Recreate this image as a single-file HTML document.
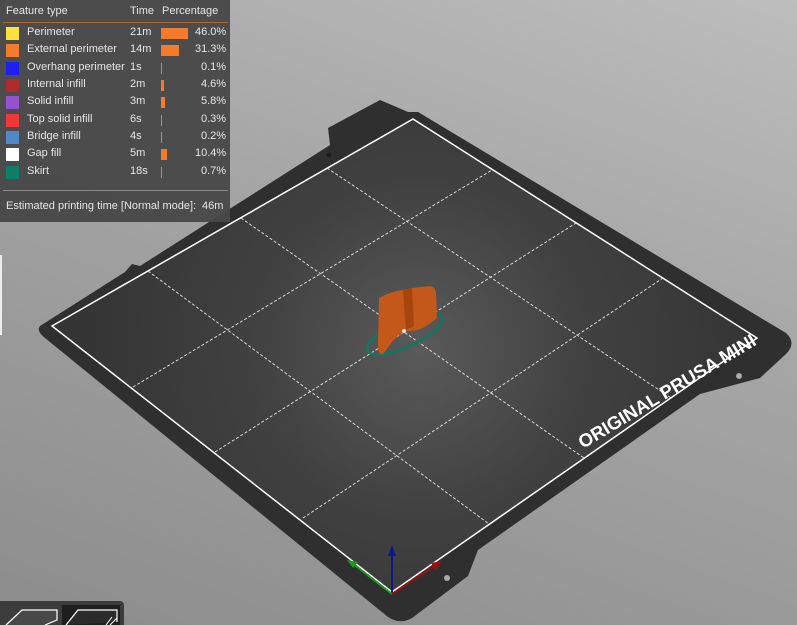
<!DOCTYPE html>
<html><head><meta charset="utf-8"><style>
html,body{margin:0;padding:0;width:797px;height:625px;overflow:hidden;font-family:"Liberation Sans","DejaVu Sans",sans-serif}
#bg{position:absolute;left:0;top:0;width:797px;height:625px;background:linear-gradient(200deg,#bdbdbd 0%,#a6a6a6 40%,#8c8c8c 100%)}
svg{position:absolute;left:0;top:0}
#leg{position:absolute;left:0;top:0;width:230px;height:222px;background:rgba(72,72,72,0.96);color:#e6e6e6;font-size:11px}
.r{position:absolute;left:0;height:17px;width:230px}
.r span{position:absolute;top:1px}
.sw{position:absolute;left:6px;top:2px;width:13px;height:13px}
.bar{position:absolute;left:161px;top:3px;height:11px;background:#f47b2b}
</style></head><body>
<div id="bg"></div>
<svg width="797" height="625" viewBox="0 0 797 625">
<defs>
<radialGradient id="pg" cx="420" cy="350" r="330" gradientUnits="userSpaceOnUse">
<stop offset="0" stop-color="#5a5a5a"/><stop offset="0.5" stop-color="#414141"/><stop offset="1" stop-color="#353535"/></radialGradient>
</defs>
<path d="M40,326 L125,272 L132,264 L140,266 L330,145 L328,128 L380,100 L408,112 L418,112 L786,333 Q797,343 786,354 L760,378 L700,394 L478,550 L468,576 L412,618 Q400,625 388,617 L45,338 Q36,331 40,326 Z" fill="#2f2f2f"/>
<polygon points="52,326 413,119 757,338 392,592" fill="url(#pg)" stroke="#fff" stroke-width="1.5"/>
<g stroke="#e8e8e8" stroke-width="0.9" stroke-dasharray="3,2" fill="none">
<line x1="148" y1="271" x2="489" y2="524"/>
<line x1="241" y1="218" x2="584" y2="458"/>
<line x1="327" y1="168" x2="671" y2="398"/>
<line x1="133" y1="387" x2="492" y2="170"/>
<line x1="215" y1="452" x2="576" y2="223"/>
<line x1="303" y1="518" x2="663" y2="278"/>
</g>
<circle cx="739" cy="376" r="3" fill="#aaa"/>
<circle cx="447" cy="578" r="3" fill="#aaa"/>
<circle cx="329" cy="155" r="2.5" fill="#1e1e1e"/>
<text x="0" y="0" transform="translate(583,449) rotate(-31)" fill="#fff" font-weight="bold" font-size="18.5" font-family="Liberation Sans,sans-serif">ORIGINAL PRUSA MINI</text>
<ellipse cx="405" cy="334" rx="41" ry="13" transform="rotate(-24 405 334)" fill="none" stroke="#0b7a5e" stroke-width="2.5"/>
<path d="M379,298 Q392,291 403,290 L412,288 L430,286 Q436,287 436,294 L437,318 Q428,326 418,330 L408,331 Q398,334 392,342 L383,354 Q378,355 378,346 Z" fill="#c4581a"/>
<path d="M403,290 L412,288 L414,326 L406,330 Z" fill="#a8450f"/>
<circle cx="404" cy="331" r="2" fill="#e8e8e8"/>
<g stroke-width="2" fill="none">
<line x1="392" y1="594" x2="392" y2="552" stroke="#0a1a8a"/>
<line x1="392" y1="594" x2="352" y2="563" stroke="#1a9a1a"/>
<line x1="392" y1="594" x2="436" y2="565" stroke="#9a1010"/>
</g>
<polygon points="392,545 388,556 396,556" fill="#0a1a8a"/>
<polygon points="347,560 358,562 353,568" fill="#1a9a1a"/>
<polygon points="442,561 431,563 436,570" fill="#9a1010"/>
</svg>
<div style="position:absolute;left:0;top:255px;width:2px;height:80px;background:#eee"></div>
<div id="leg">
<div class="r" style="top:4px"><span style="left:6px">Feature type</span><span style="left:130px">Time</span><span style="left:162px">Percentage</span></div>
<div style="position:absolute;left:3px;top:22px;width:225px;height:1px;background:#b06a35"></div>
<div class="r" style="top:25px"><div class="sw" style="background:#ffe03c"></div><span style="left:27px">Perimeter</span><span style="left:130px">21m</span><div class="bar" style="width:27px"></div><span style="left:195px">46.0%</span></div>
<div class="r" style="top:42px"><div class="sw" style="background:#f47b2b"></div><span style="left:27px">External perimeter</span><span style="left:130px">14m</span><div class="bar" style="width:18px"></div><span style="left:195px">31.3%</span></div>
<div class="r" style="top:60px"><div class="sw" style="background:#1f1ff5"></div><span style="left:27px">Overhang perimeter</span><span style="left:130px">1s</span><div class="bar" style="width:1px"></div><span style="left:201px">0.1%</span></div>
<div class="r" style="top:77px"><div class="sw" style="background:#b02a2a"></div><span style="left:27px">Internal infill</span><span style="left:130px">2m</span><div class="bar" style="width:3px"></div><span style="left:201px">4.6%</span></div>
<div class="r" style="top:94px"><div class="sw" style="background:#9352d0"></div><span style="left:27px">Solid infill</span><span style="left:130px">3m</span><div class="bar" style="width:4px"></div><span style="left:201px">5.8%</span></div>
<div class="r" style="top:112px"><div class="sw" style="background:#f0383a"></div><span style="left:27px">Top solid infill</span><span style="left:130px">6s</span><div class="bar" style="width:1px"></div><span style="left:201px">0.3%</span></div>
<div class="r" style="top:129px"><div class="sw" style="background:#5088c8"></div><span style="left:27px">Bridge infill</span><span style="left:130px">4s</span><div class="bar" style="width:1px"></div><span style="left:201px">0.2%</span></div>
<div class="r" style="top:146px"><div class="sw" style="background:#ffffff"></div><span style="left:27px">Gap fill</span><span style="left:130px">5m</span><div class="bar" style="width:6px"></div><span style="left:195px">10.4%</span></div>
<div class="r" style="top:164px"><div class="sw" style="background:#0d7f66"></div><span style="left:27px">Skirt</span><span style="left:130px">18s</span><div class="bar" style="width:1px"></div><span style="left:201px">0.7%</span></div>
<div style="position:absolute;left:3px;top:190px;width:225px;height:1px;background:#8a8a8a"></div>
<div class="r" style="top:199px"><span style="left:6px">Estimated printing time [Normal mode]:</span><span style="left:202px">46m</span></div>
</div>
<div style="position:absolute;left:0;top:601px;width:124px;height:24px;background:#3c3c3c;border-radius:0 4px 0 0"></div>
<div style="position:absolute;left:62px;top:605px;width:58px;height:20px;background:#1e1e1e"></div>
<svg width="797" height="625" style="pointer-events:none">
<path d="M6,625 L22,610 L57,610 L57,620 L45,625" fill="#484848" stroke="#fff" stroke-width="1.2"/>
<path d="M66,625 L78,610 L117,610 L117,622" fill="#2b2b2b" stroke="#fff" stroke-width="1.2"/>
<path d="M112,617 L106,625 M117,618 L110,625" stroke="#fff" stroke-width="1"/>
</svg>
</body></html>
